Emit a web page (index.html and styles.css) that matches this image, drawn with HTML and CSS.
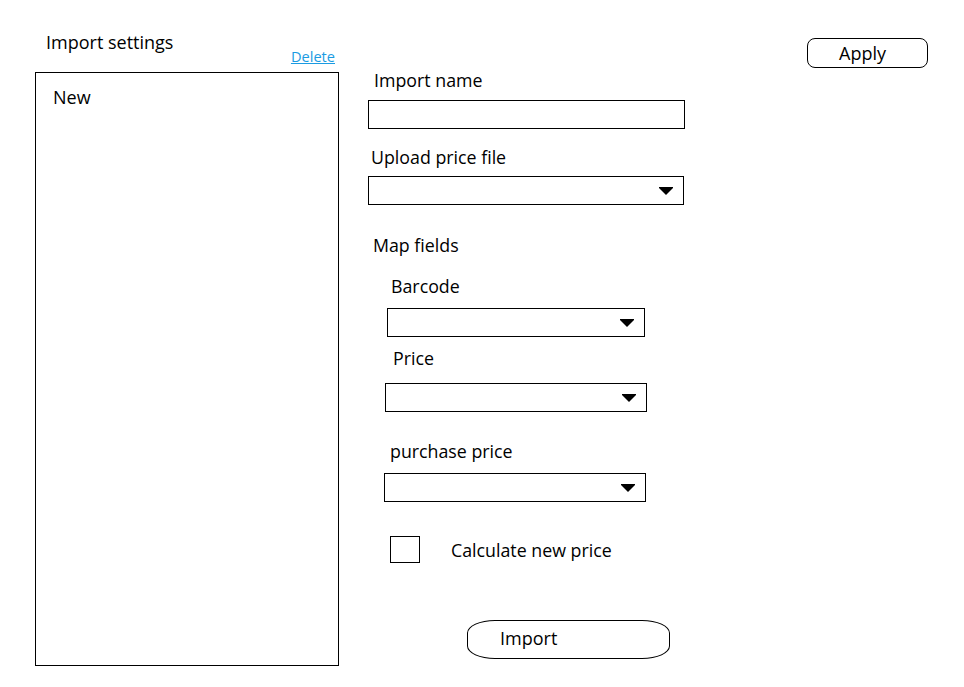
FILE: index.html
```html
<!DOCTYPE html>
<html lang="en">
<head>
<meta charset="utf-8">
<title>Import settings</title>
<link rel="stylesheet" href="styles.css">
</head>
<body>
<div class="page">
  <aside class="sidebar">
    <div class="sidebar-head">
      <h1 class="sidebar-title">Import settings</h1>
      <a class="delete-link" href="#">Delete</a>
    </div>
    <div class="list-box">
      <div class="list-item">New</div>
    </div>
  </aside>

  <main class="form">
    <label class="label label-name">Import name</label>
    <div class="input input-name"></div>

    <label class="label label-upload">Upload price file</label>
    <div class="input select select-upload">
      <svg class="arrow" width="14" height="8" viewBox="0 0 14 8"><polygon points="0,0 14,0 14,1 7,8 0,1" fill="#000"/></svg>
    </div>

    <div class="label label-map">Map fields</div>

    <label class="label label-barcode">Barcode</label>
    <div class="input select select-barcode">
      <svg class="arrow" width="14" height="8" viewBox="0 0 14 8"><polygon points="0,0 14,0 14,1 7,8 0,1" fill="#000"/></svg>
    </div>

    <label class="label label-price">Price</label>
    <div class="input select select-price">
      <svg class="arrow" width="14" height="8" viewBox="0 0 14 8"><polygon points="0,0 14,0 14,1 7,8 0,1" fill="#000"/></svg>
    </div>

    <label class="label label-purchase">purchase price</label>
    <div class="input select select-purchase">
      <svg class="arrow" width="14" height="8" viewBox="0 0 14 8"><polygon points="0,0 14,0 14,1 7,8 0,1" fill="#000"/></svg>
    </div>

    <div class="check-row">
      <span class="checkbox"></span>
      <span class="check-label">Calculate new price</span>
    </div>

    <button class="btn btn-import" type="button">Import</button>
  </main>

  <button class="btn btn-apply" type="button">Apply</button>
</div>
</body>
</html>
```

FILE: styles.css
```css
* {
  box-sizing: border-box;
}

html, body {
  margin: 0;
  padding: 0;
  background: #fff;
}

body {
  font-family: "Open Sans", "Noto Sans", "Liberation Sans", sans-serif;
  color: #000;
  width: 964px;
  height: 687px;
  overflow: hidden;
}

.page {
  display: flex;
  align-items: flex-start;
}

/* ---------- sidebar ---------- */
.sidebar {
  margin-left: 35px;
  margin-top: 30px;
  width: 304px;
}

.sidebar-head {
  height: 42px;
  display: flex;
  justify-content: space-between;
  align-items: flex-start;
}

.sidebar-title {
  margin: 2px 0 0 11px;
  font-size: 18px;
  font-weight: 400;
  line-height: 20px;
}

.delete-link {
  align-self: flex-end;
  margin: 0 4px 7px 0;
  font-size: 14.6px;
  line-height: 17px;
  color: #1a9be2;
  text-decoration: underline;
}

.list-box {
  height: 594px;
  border: 1px solid #000;
  padding: 14px 0 0 17px;
}

.list-item {
  font-size: 18px;
  line-height: 20px;
}

/* ---------- form ---------- */
.form {
  margin-left: 29px;
  width: 320px;
  display: flex;
  flex-direction: column;
  align-items: flex-start;
}

.label {
  display: block;
  font-size: 17.8px;
  line-height: 20px;
}

.input {
  height: 29px;
  border: 1px solid #000;
}

.select {
  display: flex;
  justify-content: flex-end;
  align-items: center;
  padding-right: 10px;
}

.arrow {
  display: block;
}

.label-name { margin: 70px 0 0 6px; }
.input-name { margin-top: 10px; width: 317px; }

.label-upload { margin: 18px 0 0 3px; }
.select-upload { margin-top: 9px; width: 316px; }

.label-map { margin: 30px 0 0 5px; }

.label-barcode { margin: 21px 0 0 23px; }
.select-barcode { margin: 12px 0 0 19px; width: 258px; }

.label-price { margin: 11px 0 0 25px; }
.select-price { margin: 15px 0 0 17px; width: 262px; }

.label-purchase { margin: 29px 0 0 22px; }
.select-purchase { margin: 12px 0 0 16px; width: 262px; }

.check-row {
  margin: 34px 0 0 22px;
  display: flex;
  align-items: center;
}

.checkbox {
  width: 30px;
  height: 27px;
  border: 1px solid #000;
}

.check-label {
  margin-left: 31px;
  font-size: 17.8px;
  line-height: 20px;
}

/* ---------- buttons ---------- */
.btn {
  font-family: inherit;
  color: #000;
  background: #fff;
  border: 1px solid #000;
  padding: 0;
  text-align: left;
  cursor: pointer;
}

.btn-import {
  margin: 57px 0 0 99px;
  width: 203px;
  height: 39px;
  border-radius: 28px / 13px;
  padding: 0 0 4px 32px;
  font-size: 18px;
  line-height: 20px;
}

.btn-apply {
  margin: 38px 36px 0 auto;
  width: 121px;
  height: 30px;
  border-radius: 8px;
  padding-left: 31px;
  font-size: 18px;
  line-height: 20px;
}
```
